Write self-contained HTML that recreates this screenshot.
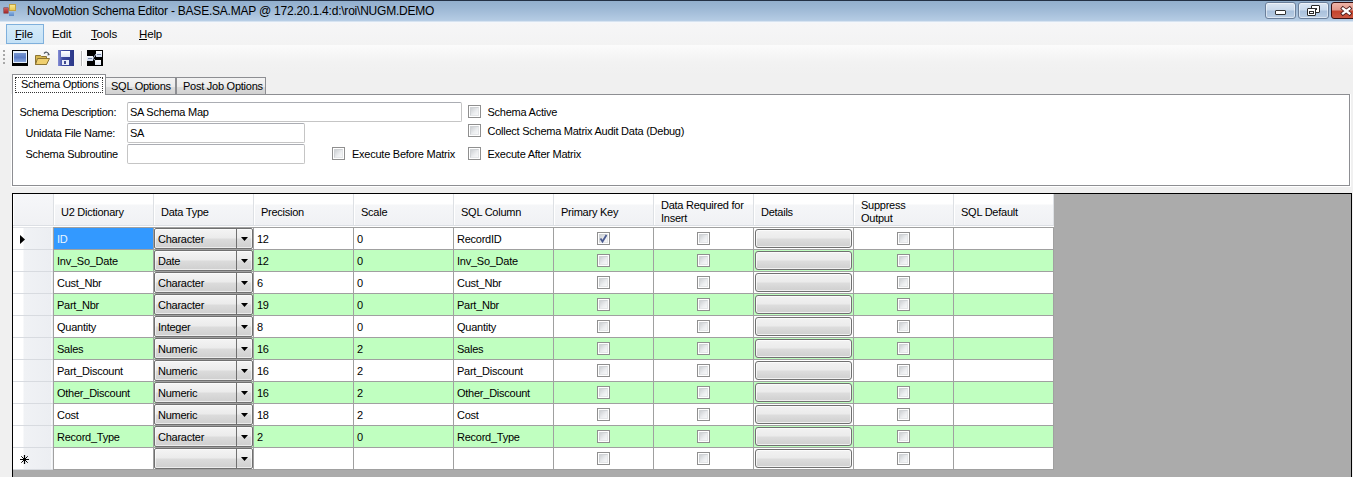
<!DOCTYPE html><html><head><meta charset="utf-8"><style>
html,body{margin:0;padding:0;}
body{width:1353px;height:477px;overflow:hidden;position:relative;background:#f0f0f0;font-family:"Liberation Sans",sans-serif;}
.t{position:absolute;white-space:nowrap;color:#000;}
.cb{position:absolute;width:13px;height:13px;box-sizing:border-box;border:1px solid #8f8f8f;background:#fff;}
.cb::before{content:"";position:absolute;left:1px;top:1px;width:9px;height:9px;box-sizing:border-box;border:1px solid #cfd2d5;border-right-color:#e4e6e8;border-bottom-color:#e4e6e8;background:linear-gradient(135deg,#cdd0d3,#eceef0 60%,#f6f7f8);}
.cb svg{z-index:2}
.combo{position:absolute;width:99px;height:21px;box-sizing:border-box;border:1px solid #707070;border-radius:2px;background:linear-gradient(#f4f4f4 0,#ebebeb 9px,#dcdcdc 10px,#cfcfcf 19px);box-shadow:inset 0 0 0 1px rgba(255,255,255,0.6);}
.cbtn{position:absolute;left:81px;top:0;width:16px;height:19px;border-left:1px solid #707070;box-sizing:border-box;}
.arr{position:absolute;left:86px;top:8px;}
.btn{position:absolute;width:97px;height:19px;box-sizing:border-box;border:1px solid #707070;border-radius:3px;background:linear-gradient(#f2f2f2 0,#ebebeb 8px,#dddddd 9px,#cfcfcf 17px);box-shadow:inset 0 0 0 1px rgba(255,255,255,0.7);}
</style></head><body><div style="position:absolute;left:0px;top:0px;width:1353px;height:23px;background:linear-gradient(#92afcd 1px,#9cb7d4 8px,#b4cbe3 20px,#bad0e7 21px,#f4f7fb 22px);"></div>
<div style="position:absolute;left:0px;top:0px;width:1353px;height:1px;background:#233044;"></div>
<div style="position:absolute;left:4px;top:8px;width:4px;height:5px;background:linear-gradient(#d06060,#a02828);box-shadow:0 0 0 0.5px #802020;"></div>
<div style="position:absolute;left:9px;top:4px;width:7px;height:7px;background:linear-gradient(#f8e890,#e8c850);border:1px solid #c0a040;box-sizing:border-box;"></div>
<div style="position:absolute;left:9px;top:12px;width:5px;height:4px;background:linear-gradient(#88b0e0,#5a88c8);"></div>
<div class="t" style="left:27px;top:5px;font-size:12px;line-height:12px;letter-spacing:-0.22px;color:#000;">NovoMotion Schema Editor - BASE.SA.MAP @ 172.20.1.4:d:\roi\NUGM.DEMO</div>
<div style="position:absolute;left:1265px;top:2px;width:31px;height:17px;box-sizing:border-box;border:1px solid #6b7f9a;border-radius:3px;background:linear-gradient(#dbe6f3 0,#c9d9ec 7px,#a9c0db 8px,#bcd0e6 16px);box-shadow:inset 0 0 0 1px rgba(255,255,255,0.5);"></div>
<div style="position:absolute;left:1298px;top:2px;width:31px;height:17px;box-sizing:border-box;border:1px solid #6b7f9a;border-radius:3px;background:linear-gradient(#dbe6f3 0,#c9d9ec 7px,#a9c0db 8px,#bcd0e6 16px);box-shadow:inset 0 0 0 1px rgba(255,255,255,0.5);"></div>
<div style="position:absolute;left:1275px;top:10px;width:11px;height:5px;box-sizing:border-box;background:#fff;border:1px solid #333;border-radius:1px;"></div>
<div style="position:absolute;left:1311px;top:5px;width:9px;height:8px;box-sizing:border-box;background:#fff;border:1px solid #2a2a2a;border-radius:1px;"></div>
<div style="position:absolute;left:1314px;top:8px;width:3px;height:2px;box-sizing:border-box;border:1px solid #2a2a2a;"></div>
<div style="position:absolute;left:1307px;top:8px;width:9px;height:8px;box-sizing:border-box;background:#fff;border:1px solid #2a2a2a;border-radius:1px;"></div>
<div style="position:absolute;left:1309px;top:11px;width:5px;height:3px;box-sizing:border-box;border:1px solid #2a2a2a;"></div>
<div style="position:absolute;left:1331px;top:2px;width:30px;height:17px;box-sizing:border-box;border:1px solid #3a1010;border-radius:3px;background:linear-gradient(#eeb4a8 0,#e0978a 7px,#c4432c 8px,#cc5a44 16px);"></div>
<svg style="position:absolute;left:1339px;top:4px" width="14" height="13"><path d="M4 4.5 L10.5 9.5 M10.5 4.5 L4 9.5" stroke="#4a1a1a" stroke-width="4" stroke-linecap="square"/><path d="M4 4.5 L10.5 9.5 M10.5 4.5 L4 9.5" stroke="#fff" stroke-width="2.3" stroke-linecap="square"/></svg>
<div style="position:absolute;left:0px;top:23px;width:1353px;height:22px;background:linear-gradient(#f6f6f7,#f3f3f3);"></div>
<div style="position:absolute;left:6px;top:24px;width:38px;height:20px;box-sizing:border-box;border:1px solid #7fb0dc;background:linear-gradient(#d6ebf9,#c4e1f6);"></div>
<div class="t" style="left:15px;top:29px;font-size:11.5px;line-height:11.5px;letter-spacing:-0.15px;color:#000;">File</div>
<div class="t" style="left:52px;top:29px;font-size:11.5px;line-height:11.5px;letter-spacing:-0.15px;color:#000;">Edit</div>
<div class="t" style="left:91px;top:29px;font-size:11.5px;line-height:11.5px;letter-spacing:-0.15px;color:#000;">Tools</div>
<div class="t" style="left:139px;top:29px;font-size:11.5px;line-height:11.5px;letter-spacing:-0.15px;color:#000;">Help</div>
<div style="position:absolute;left:15px;top:39px;width:6px;height:1px;background:#000;"></div>
<div style="position:absolute;left:91px;top:39px;width:6px;height:1px;background:#000;"></div>
<div style="position:absolute;left:139px;top:39px;width:8px;height:1px;background:#000;"></div>
<div style="position:absolute;left:0px;top:45px;width:1353px;height:29px;background:linear-gradient(#fbfbfb,#f2f2f2 60%,#f0f0f0);"></div>
<div style="position:absolute;left:3px;top:50px;width:2px;height:2px;background:#a8a8a8;"></div>
<div style="position:absolute;left:3px;top:54px;width:2px;height:2px;background:#a8a8a8;"></div>
<div style="position:absolute;left:3px;top:58px;width:2px;height:2px;background:#a8a8a8;"></div>
<div style="position:absolute;left:3px;top:62px;width:2px;height:2px;background:#a8a8a8;"></div>
<div style="position:absolute;left:12px;top:50px;width:16px;height:16px;background:#000;"></div>
<div style="position:absolute;left:13px;top:51px;width:14px;height:12px;background:#e6f0fb;"></div>
<div style="position:absolute;left:14px;top:53px;width:12px;height:9px;background:linear-gradient(#7896cf,#5a7cc4 50%,#8aa8e0);"></div>
<svg style="position:absolute;left:34px;top:50px" width="18" height="16"><path d="M1.5 5.5 h5 l1 1 h5 v8 h-11z" fill="#d8b850" stroke="#8c7434"/><path d="M3.5 8.5 h12 l-3 6 h-11z" fill="#f0d070" stroke="#8c7434"/><path d="M10 3.5 q3 -3 5 1" fill="none" stroke="#505860" stroke-width="1.2"/><path d="M14 3 l2 2 l-2.5 0.5z" fill="#505860"/></svg>
<div style="position:absolute;left:58px;top:50px;width:16px;height:16px;background:linear-gradient(90deg,#8890d8,#3c4aa0 30%,#2c3888);"></div>
<div style="position:absolute;left:61px;top:51px;width:9px;height:6px;background:linear-gradient(#fff,#dde4f8);"></div>
<div style="position:absolute;left:62px;top:60px;width:7px;height:5px;background:#e8ecf8;"></div>
<div style="position:absolute;left:64px;top:61px;width:2px;height:3px;background:#404a90;"></div>
<div style="position:absolute;left:81px;top:51px;width:1px;height:15px;background:#b8b8b8;"></div>
<div style="position:absolute;left:82px;top:51px;width:1px;height:15px;background:#fff;"></div>
<div style="position:absolute;left:87px;top:50px;width:16px;height:16px;background:#000;"></div>
<div style="position:absolute;left:87px;top:56px;width:6px;height:5px;background:linear-gradient(#f4f8ff,#c8d4e8);"></div>
<div style="position:absolute;left:88px;top:58px;width:4px;height:1px;background:#7888a8;"></div>
<div style="position:absolute;left:96px;top:51px;width:6px;height:6px;background:linear-gradient(#ffffff,#d0dcf0);"></div>
<div style="position:absolute;left:97px;top:54px;width:4px;height:1px;background:#7888a8;"></div>
<div style="position:absolute;left:95px;top:60px;width:6px;height:5px;background:linear-gradient(#ffffff,#e0e8f8);"></div>
<svg style="position:absolute;left:87px;top:50px" width="16" height="16"><path d="M6 8.5 L9 4 M6 8.5 L8.5 10.5" stroke="#b8c8e0" stroke-width="1"/></svg>
<div style="position:absolute;left:105px;top:77px;width:71px;height:18px;box-sizing:border-box;border:1px solid #8d8e92;border-bottom:none;background:linear-gradient(#f3f3f3,#ebebeb 50%,#dddddd 51%,#cfcfcf);"></div>
<div style="position:absolute;left:176px;top:77px;width:90px;height:18px;box-sizing:border-box;border:1px solid #8d8e92;border-bottom:none;background:linear-gradient(#f3f3f3,#ebebeb 50%,#dddddd 51%,#cfcfcf);"></div>
<div style="position:absolute;left:12px;top:94px;width:1338px;height:92px;box-sizing:border-box;border:1px solid #8d8e92;background:#fff;"></div>
<div style="position:absolute;left:11px;top:94px;width:1px;height:93px;background:#fff;"></div>
<div style="position:absolute;left:1350px;top:94px;width:1px;height:93px;background:#fff;"></div>
<div style="position:absolute;left:11px;top:186px;width:1340px;height:1px;background:#fff;"></div>
<div style="position:absolute;left:12px;top:74px;width:94px;height:21px;box-sizing:border-box;border:1px solid #8d8e92;border-bottom:none;background:#fff;"></div>
<div style="position:absolute;left:13px;top:94px;width:92px;height:1px;background:#fff;"></div>
<div style="position:absolute;left:15px;top:77px;width:88px;height:16px;box-sizing:border-box;border:1px dotted #333;"></div>
<div class="t" style="left:21px;top:79px;font-size:11px;line-height:11px;letter-spacing:-0.25px;color:#000;">Schema Options</div>
<div class="t" style="left:111px;top:81px;font-size:11px;line-height:11px;letter-spacing:-0.25px;color:#000;">SQL Options</div>
<div class="t" style="left:183px;top:81px;font-size:11px;line-height:11px;letter-spacing:-0.25px;color:#000;">Post Job Options</div>
<div class="t" style="left:19.5px;top:107px;font-size:11px;line-height:11px;letter-spacing:-0.25px;color:#000;">Schema Description:</div>
<div class="t" style="left:25.5px;top:128px;font-size:11px;line-height:11px;letter-spacing:-0.25px;color:#000;">Unidata File Name:</div>
<div class="t" style="left:25.5px;top:149px;font-size:11px;line-height:11px;letter-spacing:-0.25px;color:#000;">Schema Subroutine</div>
<div style="position:absolute;left:127px;top:102px;width:335px;height:20px;box-sizing:border-box;border:1px solid #c5c5c5;border-top-color:#abadb3;border-radius:2px;background:#fff;"></div>
<div class="t" style="left:130px;top:107px;font-size:11px;line-height:11px;letter-spacing:-0.25px;color:#000;">SA Schema Map</div>
<div style="position:absolute;left:127px;top:123px;width:178px;height:20px;box-sizing:border-box;border:1px solid #c5c5c5;border-top-color:#abadb3;border-radius:2px;background:#fff;"></div>
<div class="t" style="left:130px;top:128px;font-size:11px;line-height:11px;letter-spacing:-0.25px;color:#000;">SA</div>
<div style="position:absolute;left:127px;top:144px;width:178px;height:20px;box-sizing:border-box;border:1px solid #c5c5c5;border-top-color:#abadb3;border-radius:2px;background:#fff;"></div>
<div class="cb" style="left:468px;top:105px"></div>
<div class="t" style="left:487.5px;top:107px;font-size:11px;line-height:11px;letter-spacing:-0.25px;color:#000;">Schema Active</div>
<div class="cb" style="left:468px;top:124px"></div>
<div class="t" style="left:487.5px;top:126px;font-size:11px;line-height:11px;letter-spacing:-0.25px;color:#000;">Collect Schema Matrix Audit Data (Debug)</div>
<div class="cb" style="left:468px;top:147px"></div>
<div class="t" style="left:487.5px;top:149px;font-size:11px;line-height:11px;letter-spacing:-0.25px;color:#000;">Execute After Matrix</div>
<div class="cb" style="left:332px;top:147px"></div>
<div class="t" style="left:352px;top:149px;font-size:11px;line-height:11px;letter-spacing:-0.25px;color:#000;">Execute Before Matrix</div>
<div style="position:absolute;left:12px;top:193px;width:1340px;height:284px;background:#ababab;"></div>
<div style="position:absolute;left:12px;top:193px;width:1340px;height:1px;background:#000;"></div>
<div style="position:absolute;left:12px;top:193px;width:1px;height:284px;background:#000;"></div>
<div style="position:absolute;left:1351px;top:193px;width:1px;height:284px;background:#000;"></div>
<div style="position:absolute;left:13px;top:194px;width:1041px;height:33px;background:linear-gradient(#ffffff 0,#ffffff 10px,#f5f6f8 11px,#f0f1f4 31px);"></div>
<div style="position:absolute;left:13px;top:225px;width:1041px;height:1px;background:#dcdfe4;"></div>
<div style="position:absolute;left:13px;top:226px;width:1041px;height:1px;background:#ffffff;"></div>
<div style="position:absolute;left:13px;top:194px;width:40px;height:31px;background:linear-gradient(#f6f7f9,#f0f1f4);"></div>
<div style="position:absolute;left:13px;top:194px;width:1px;height:31px;background:#fff;"></div>
<div style="position:absolute;left:53px;top:194px;width:1px;height:31px;background:#dde0e4;"></div>
<div style="position:absolute;left:54px;top:194px;width:1px;height:31px;background:#fff;"></div>
<div style="position:absolute;left:153px;top:194px;width:1px;height:31px;background:#dde0e4;"></div>
<div style="position:absolute;left:154px;top:194px;width:1px;height:31px;background:#fff;"></div>
<div style="position:absolute;left:253px;top:194px;width:1px;height:31px;background:#dde0e4;"></div>
<div style="position:absolute;left:254px;top:194px;width:1px;height:31px;background:#fff;"></div>
<div style="position:absolute;left:353px;top:194px;width:1px;height:31px;background:#dde0e4;"></div>
<div style="position:absolute;left:354px;top:194px;width:1px;height:31px;background:#fff;"></div>
<div style="position:absolute;left:453px;top:194px;width:1px;height:31px;background:#dde0e4;"></div>
<div style="position:absolute;left:454px;top:194px;width:1px;height:31px;background:#fff;"></div>
<div style="position:absolute;left:553px;top:194px;width:1px;height:31px;background:#dde0e4;"></div>
<div style="position:absolute;left:554px;top:194px;width:1px;height:31px;background:#fff;"></div>
<div style="position:absolute;left:653px;top:194px;width:1px;height:31px;background:#dde0e4;"></div>
<div style="position:absolute;left:654px;top:194px;width:1px;height:31px;background:#fff;"></div>
<div style="position:absolute;left:753px;top:194px;width:1px;height:31px;background:#dde0e4;"></div>
<div style="position:absolute;left:754px;top:194px;width:1px;height:31px;background:#fff;"></div>
<div style="position:absolute;left:853px;top:194px;width:1px;height:31px;background:#dde0e4;"></div>
<div style="position:absolute;left:854px;top:194px;width:1px;height:31px;background:#fff;"></div>
<div style="position:absolute;left:953px;top:194px;width:1px;height:31px;background:#dde0e4;"></div>
<div style="position:absolute;left:954px;top:194px;width:1px;height:31px;background:#fff;"></div>
<div style="position:absolute;left:1053px;top:194px;width:1px;height:31px;background:#dde0e4;"></div>
<div class="t" style="left:61px;top:207px;font-size:11px;line-height:11px;letter-spacing:-0.25px;color:#000;">U2 Dictionary</div>
<div class="t" style="left:161px;top:207px;font-size:11px;line-height:11px;letter-spacing:-0.25px;color:#000;">Data Type</div>
<div class="t" style="left:261px;top:207px;font-size:11px;line-height:11px;letter-spacing:-0.25px;color:#000;">Precision</div>
<div class="t" style="left:361px;top:207px;font-size:11px;line-height:11px;letter-spacing:-0.25px;color:#000;">Scale</div>
<div class="t" style="left:461px;top:207px;font-size:11px;line-height:11px;letter-spacing:-0.25px;color:#000;">SQL Column</div>
<div class="t" style="left:561px;top:207px;font-size:11px;line-height:11px;letter-spacing:-0.25px;color:#000;">Primary Key</div>
<div class="t" style="left:761px;top:207px;font-size:11px;line-height:11px;letter-spacing:-0.25px;color:#000;">Details</div>
<div class="t" style="left:961px;top:207px;font-size:11px;line-height:11px;letter-spacing:-0.25px;color:#000;">SQL Default</div>
<div class="t" style="left:661px;top:200px;font-size:11px;line-height:11px;letter-spacing:-0.25px;color:#000;">Data Required for</div>
<div class="t" style="left:661px;top:213px;font-size:11px;line-height:11px;letter-spacing:-0.25px;color:#000;">Insert</div>
<div class="t" style="left:861px;top:200px;font-size:11px;line-height:11px;letter-spacing:-0.25px;color:#000;">Suppress</div>
<div class="t" style="left:861px;top:213px;font-size:11px;line-height:11px;letter-spacing:-0.25px;color:#000;">Output</div>
<div style="position:absolute;left:13px;top:228px;width:40px;height:21px;background:linear-gradient(90deg,#ffffff 0,#ffffff 10px,#f0f2f5 11px,#eceef2 38px);"></div>
<div style="position:absolute;left:51px;top:228px;width:1px;height:21px;background:#f8f9fa;"></div>
<div style="position:absolute;left:13px;top:249px;width:40px;height:1px;background:#d8dbe0;"></div>
<div style="position:absolute;left:54px;top:228px;width:999px;height:21px;background:#ffffff;"></div>
<div style="position:absolute;left:54px;top:228px;width:99px;height:21px;background:#3399ff;"></div>
<div class="t" style="left:57px;top:234px;font-size:11px;line-height:11px;letter-spacing:-0.25px;color:#eaf6ff;">ID</div>
<div class="t" style="left:257px;top:234px;font-size:11px;line-height:11px;letter-spacing:-0.25px;color:#000;">12</div>
<div class="t" style="left:357px;top:234px;font-size:11px;line-height:11px;letter-spacing:-0.25px;color:#000;">0</div>
<div class="t" style="left:457px;top:234px;font-size:11px;line-height:11px;letter-spacing:-0.25px;color:#000;">RecordID</div>
<div class="combo" style="left:154px;top:228px"><div class="cbtn"></div><svg class="arr" width="7" height="4"><path d="M0 0 H7 L3.5 4z" fill="#000"/></svg><div class="t" style="left:3px;top:5px;font-size:11px;line-height:11px;letter-spacing:-0.25px">Character</div></div>
<div class="cb" style="left:597px;top:232px"><svg width="11" height="11" style="position:absolute;left:0;top:0"><path d="M2.5 5.5 L4.5 8.5 L8.5 2" stroke="#4a5a90" stroke-width="1.8" fill="none"/></svg></div>
<div class="cb" style="left:697px;top:232px"></div>
<div class="cb" style="left:897px;top:232px"></div>
<div class="btn" style="left:755px;top:229px"></div>
<div style="position:absolute;left:13px;top:250px;width:40px;height:21px;background:linear-gradient(90deg,#ffffff 0,#ffffff 10px,#f0f2f5 11px,#eceef2 38px);"></div>
<div style="position:absolute;left:51px;top:250px;width:1px;height:21px;background:#f8f9fa;"></div>
<div style="position:absolute;left:13px;top:271px;width:40px;height:1px;background:#d8dbe0;"></div>
<div style="position:absolute;left:54px;top:250px;width:999px;height:21px;background:#c0ffc0;"></div>
<div class="t" style="left:57px;top:256px;font-size:11px;line-height:11px;letter-spacing:-0.25px;color:#000;">Inv_So_Date</div>
<div class="t" style="left:257px;top:256px;font-size:11px;line-height:11px;letter-spacing:-0.25px;color:#000;">12</div>
<div class="t" style="left:357px;top:256px;font-size:11px;line-height:11px;letter-spacing:-0.25px;color:#000;">0</div>
<div class="t" style="left:457px;top:256px;font-size:11px;line-height:11px;letter-spacing:-0.25px;color:#000;">Inv_So_Date</div>
<div class="combo" style="left:154px;top:250px"><div class="cbtn"></div><svg class="arr" width="7" height="4"><path d="M0 0 H7 L3.5 4z" fill="#000"/></svg><div class="t" style="left:3px;top:5px;font-size:11px;line-height:11px;letter-spacing:-0.25px">Date</div></div>
<div class="cb" style="left:597px;top:254px"></div>
<div class="cb" style="left:697px;top:254px"></div>
<div class="cb" style="left:897px;top:254px"></div>
<div class="btn" style="left:755px;top:251px"></div>
<div style="position:absolute;left:13px;top:272px;width:40px;height:21px;background:linear-gradient(90deg,#ffffff 0,#ffffff 10px,#f0f2f5 11px,#eceef2 38px);"></div>
<div style="position:absolute;left:51px;top:272px;width:1px;height:21px;background:#f8f9fa;"></div>
<div style="position:absolute;left:13px;top:293px;width:40px;height:1px;background:#d8dbe0;"></div>
<div style="position:absolute;left:54px;top:272px;width:999px;height:21px;background:#ffffff;"></div>
<div class="t" style="left:57px;top:278px;font-size:11px;line-height:11px;letter-spacing:-0.25px;color:#000;">Cust_Nbr</div>
<div class="t" style="left:257px;top:278px;font-size:11px;line-height:11px;letter-spacing:-0.25px;color:#000;">6</div>
<div class="t" style="left:357px;top:278px;font-size:11px;line-height:11px;letter-spacing:-0.25px;color:#000;">0</div>
<div class="t" style="left:457px;top:278px;font-size:11px;line-height:11px;letter-spacing:-0.25px;color:#000;">Cust_Nbr</div>
<div class="combo" style="left:154px;top:272px"><div class="cbtn"></div><svg class="arr" width="7" height="4"><path d="M0 0 H7 L3.5 4z" fill="#000"/></svg><div class="t" style="left:3px;top:5px;font-size:11px;line-height:11px;letter-spacing:-0.25px">Character</div></div>
<div class="cb" style="left:597px;top:276px"></div>
<div class="cb" style="left:697px;top:276px"></div>
<div class="cb" style="left:897px;top:276px"></div>
<div class="btn" style="left:755px;top:273px"></div>
<div style="position:absolute;left:13px;top:294px;width:40px;height:21px;background:linear-gradient(90deg,#ffffff 0,#ffffff 10px,#f0f2f5 11px,#eceef2 38px);"></div>
<div style="position:absolute;left:51px;top:294px;width:1px;height:21px;background:#f8f9fa;"></div>
<div style="position:absolute;left:13px;top:315px;width:40px;height:1px;background:#d8dbe0;"></div>
<div style="position:absolute;left:54px;top:294px;width:999px;height:21px;background:#c0ffc0;"></div>
<div class="t" style="left:57px;top:300px;font-size:11px;line-height:11px;letter-spacing:-0.25px;color:#000;">Part_Nbr</div>
<div class="t" style="left:257px;top:300px;font-size:11px;line-height:11px;letter-spacing:-0.25px;color:#000;">19</div>
<div class="t" style="left:357px;top:300px;font-size:11px;line-height:11px;letter-spacing:-0.25px;color:#000;">0</div>
<div class="t" style="left:457px;top:300px;font-size:11px;line-height:11px;letter-spacing:-0.25px;color:#000;">Part_Nbr</div>
<div class="combo" style="left:154px;top:294px"><div class="cbtn"></div><svg class="arr" width="7" height="4"><path d="M0 0 H7 L3.5 4z" fill="#000"/></svg><div class="t" style="left:3px;top:5px;font-size:11px;line-height:11px;letter-spacing:-0.25px">Character</div></div>
<div class="cb" style="left:597px;top:298px"></div>
<div class="cb" style="left:697px;top:298px"></div>
<div class="cb" style="left:897px;top:298px"></div>
<div class="btn" style="left:755px;top:295px"></div>
<div style="position:absolute;left:13px;top:316px;width:40px;height:21px;background:linear-gradient(90deg,#ffffff 0,#ffffff 10px,#f0f2f5 11px,#eceef2 38px);"></div>
<div style="position:absolute;left:51px;top:316px;width:1px;height:21px;background:#f8f9fa;"></div>
<div style="position:absolute;left:13px;top:337px;width:40px;height:1px;background:#d8dbe0;"></div>
<div style="position:absolute;left:54px;top:316px;width:999px;height:21px;background:#ffffff;"></div>
<div class="t" style="left:57px;top:322px;font-size:11px;line-height:11px;letter-spacing:-0.25px;color:#000;">Quantity</div>
<div class="t" style="left:257px;top:322px;font-size:11px;line-height:11px;letter-spacing:-0.25px;color:#000;">8</div>
<div class="t" style="left:357px;top:322px;font-size:11px;line-height:11px;letter-spacing:-0.25px;color:#000;">0</div>
<div class="t" style="left:457px;top:322px;font-size:11px;line-height:11px;letter-spacing:-0.25px;color:#000;">Quantity</div>
<div class="combo" style="left:154px;top:316px"><div class="cbtn"></div><svg class="arr" width="7" height="4"><path d="M0 0 H7 L3.5 4z" fill="#000"/></svg><div class="t" style="left:3px;top:5px;font-size:11px;line-height:11px;letter-spacing:-0.25px">Integer</div></div>
<div class="cb" style="left:597px;top:320px"></div>
<div class="cb" style="left:697px;top:320px"></div>
<div class="cb" style="left:897px;top:320px"></div>
<div class="btn" style="left:755px;top:317px"></div>
<div style="position:absolute;left:13px;top:338px;width:40px;height:21px;background:linear-gradient(90deg,#ffffff 0,#ffffff 10px,#f0f2f5 11px,#eceef2 38px);"></div>
<div style="position:absolute;left:51px;top:338px;width:1px;height:21px;background:#f8f9fa;"></div>
<div style="position:absolute;left:13px;top:359px;width:40px;height:1px;background:#d8dbe0;"></div>
<div style="position:absolute;left:54px;top:338px;width:999px;height:21px;background:#c0ffc0;"></div>
<div class="t" style="left:57px;top:344px;font-size:11px;line-height:11px;letter-spacing:-0.25px;color:#000;">Sales</div>
<div class="t" style="left:257px;top:344px;font-size:11px;line-height:11px;letter-spacing:-0.25px;color:#000;">16</div>
<div class="t" style="left:357px;top:344px;font-size:11px;line-height:11px;letter-spacing:-0.25px;color:#000;">2</div>
<div class="t" style="left:457px;top:344px;font-size:11px;line-height:11px;letter-spacing:-0.25px;color:#000;">Sales</div>
<div class="combo" style="left:154px;top:338px"><div class="cbtn"></div><svg class="arr" width="7" height="4"><path d="M0 0 H7 L3.5 4z" fill="#000"/></svg><div class="t" style="left:3px;top:5px;font-size:11px;line-height:11px;letter-spacing:-0.25px">Numeric</div></div>
<div class="cb" style="left:597px;top:342px"></div>
<div class="cb" style="left:697px;top:342px"></div>
<div class="cb" style="left:897px;top:342px"></div>
<div class="btn" style="left:755px;top:339px"></div>
<div style="position:absolute;left:13px;top:360px;width:40px;height:21px;background:linear-gradient(90deg,#ffffff 0,#ffffff 10px,#f0f2f5 11px,#eceef2 38px);"></div>
<div style="position:absolute;left:51px;top:360px;width:1px;height:21px;background:#f8f9fa;"></div>
<div style="position:absolute;left:13px;top:381px;width:40px;height:1px;background:#d8dbe0;"></div>
<div style="position:absolute;left:54px;top:360px;width:999px;height:21px;background:#ffffff;"></div>
<div class="t" style="left:57px;top:366px;font-size:11px;line-height:11px;letter-spacing:-0.25px;color:#000;">Part_Discount</div>
<div class="t" style="left:257px;top:366px;font-size:11px;line-height:11px;letter-spacing:-0.25px;color:#000;">16</div>
<div class="t" style="left:357px;top:366px;font-size:11px;line-height:11px;letter-spacing:-0.25px;color:#000;">2</div>
<div class="t" style="left:457px;top:366px;font-size:11px;line-height:11px;letter-spacing:-0.25px;color:#000;">Part_Discount</div>
<div class="combo" style="left:154px;top:360px"><div class="cbtn"></div><svg class="arr" width="7" height="4"><path d="M0 0 H7 L3.5 4z" fill="#000"/></svg><div class="t" style="left:3px;top:5px;font-size:11px;line-height:11px;letter-spacing:-0.25px">Numeric</div></div>
<div class="cb" style="left:597px;top:364px"></div>
<div class="cb" style="left:697px;top:364px"></div>
<div class="cb" style="left:897px;top:364px"></div>
<div class="btn" style="left:755px;top:361px"></div>
<div style="position:absolute;left:13px;top:382px;width:40px;height:21px;background:linear-gradient(90deg,#ffffff 0,#ffffff 10px,#f0f2f5 11px,#eceef2 38px);"></div>
<div style="position:absolute;left:51px;top:382px;width:1px;height:21px;background:#f8f9fa;"></div>
<div style="position:absolute;left:13px;top:403px;width:40px;height:1px;background:#d8dbe0;"></div>
<div style="position:absolute;left:54px;top:382px;width:999px;height:21px;background:#c0ffc0;"></div>
<div class="t" style="left:57px;top:388px;font-size:11px;line-height:11px;letter-spacing:-0.25px;color:#000;">Other_Discount</div>
<div class="t" style="left:257px;top:388px;font-size:11px;line-height:11px;letter-spacing:-0.25px;color:#000;">16</div>
<div class="t" style="left:357px;top:388px;font-size:11px;line-height:11px;letter-spacing:-0.25px;color:#000;">2</div>
<div class="t" style="left:457px;top:388px;font-size:11px;line-height:11px;letter-spacing:-0.25px;color:#000;">Other_Discount</div>
<div class="combo" style="left:154px;top:382px"><div class="cbtn"></div><svg class="arr" width="7" height="4"><path d="M0 0 H7 L3.5 4z" fill="#000"/></svg><div class="t" style="left:3px;top:5px;font-size:11px;line-height:11px;letter-spacing:-0.25px">Numeric</div></div>
<div class="cb" style="left:597px;top:386px"></div>
<div class="cb" style="left:697px;top:386px"></div>
<div class="cb" style="left:897px;top:386px"></div>
<div class="btn" style="left:755px;top:383px"></div>
<div style="position:absolute;left:13px;top:404px;width:40px;height:21px;background:linear-gradient(90deg,#ffffff 0,#ffffff 10px,#f0f2f5 11px,#eceef2 38px);"></div>
<div style="position:absolute;left:51px;top:404px;width:1px;height:21px;background:#f8f9fa;"></div>
<div style="position:absolute;left:13px;top:425px;width:40px;height:1px;background:#d8dbe0;"></div>
<div style="position:absolute;left:54px;top:404px;width:999px;height:21px;background:#ffffff;"></div>
<div class="t" style="left:57px;top:410px;font-size:11px;line-height:11px;letter-spacing:-0.25px;color:#000;">Cost</div>
<div class="t" style="left:257px;top:410px;font-size:11px;line-height:11px;letter-spacing:-0.25px;color:#000;">18</div>
<div class="t" style="left:357px;top:410px;font-size:11px;line-height:11px;letter-spacing:-0.25px;color:#000;">2</div>
<div class="t" style="left:457px;top:410px;font-size:11px;line-height:11px;letter-spacing:-0.25px;color:#000;">Cost</div>
<div class="combo" style="left:154px;top:404px"><div class="cbtn"></div><svg class="arr" width="7" height="4"><path d="M0 0 H7 L3.5 4z" fill="#000"/></svg><div class="t" style="left:3px;top:5px;font-size:11px;line-height:11px;letter-spacing:-0.25px">Numeric</div></div>
<div class="cb" style="left:597px;top:408px"></div>
<div class="cb" style="left:697px;top:408px"></div>
<div class="cb" style="left:897px;top:408px"></div>
<div class="btn" style="left:755px;top:405px"></div>
<div style="position:absolute;left:13px;top:426px;width:40px;height:21px;background:linear-gradient(90deg,#ffffff 0,#ffffff 10px,#f0f2f5 11px,#eceef2 38px);"></div>
<div style="position:absolute;left:51px;top:426px;width:1px;height:21px;background:#f8f9fa;"></div>
<div style="position:absolute;left:13px;top:447px;width:40px;height:1px;background:#d8dbe0;"></div>
<div style="position:absolute;left:54px;top:426px;width:999px;height:21px;background:#c0ffc0;"></div>
<div class="t" style="left:57px;top:432px;font-size:11px;line-height:11px;letter-spacing:-0.25px;color:#000;">Record_Type</div>
<div class="t" style="left:257px;top:432px;font-size:11px;line-height:11px;letter-spacing:-0.25px;color:#000;">2</div>
<div class="t" style="left:357px;top:432px;font-size:11px;line-height:11px;letter-spacing:-0.25px;color:#000;">0</div>
<div class="t" style="left:457px;top:432px;font-size:11px;line-height:11px;letter-spacing:-0.25px;color:#000;">Record_Type</div>
<div class="combo" style="left:154px;top:426px"><div class="cbtn"></div><svg class="arr" width="7" height="4"><path d="M0 0 H7 L3.5 4z" fill="#000"/></svg><div class="t" style="left:3px;top:5px;font-size:11px;line-height:11px;letter-spacing:-0.25px">Character</div></div>
<div class="cb" style="left:597px;top:430px"></div>
<div class="cb" style="left:697px;top:430px"></div>
<div class="cb" style="left:897px;top:430px"></div>
<div class="btn" style="left:755px;top:427px"></div>
<div style="position:absolute;left:13px;top:448px;width:40px;height:21px;background:linear-gradient(90deg,#ffffff 0,#ffffff 10px,#f0f2f5 11px,#eceef2 38px);"></div>
<div style="position:absolute;left:51px;top:448px;width:1px;height:21px;background:#f8f9fa;"></div>
<div style="position:absolute;left:13px;top:469px;width:40px;height:1px;background:#d8dbe0;"></div>
<div style="position:absolute;left:54px;top:448px;width:999px;height:21px;background:#ffffff;"></div>
<div class="combo" style="left:154px;top:448px"><div class="cbtn"></div><svg class="arr" width="7" height="4"><path d="M0 0 H7 L3.5 4z" fill="#000"/></svg></div>
<div class="cb" style="left:597px;top:452px"></div>
<div class="cb" style="left:697px;top:452px"></div>
<div class="cb" style="left:897px;top:452px"></div>
<div class="btn" style="left:755px;top:449px"></div>
<div style="position:absolute;left:54px;top:227px;width:1000px;height:1px;background:#a0a0a0;"></div>
<div style="position:absolute;left:54px;top:249px;width:1000px;height:1px;background:#a0a0a0;"></div>
<div style="position:absolute;left:54px;top:271px;width:1000px;height:1px;background:#a0a0a0;"></div>
<div style="position:absolute;left:54px;top:293px;width:1000px;height:1px;background:#a0a0a0;"></div>
<div style="position:absolute;left:54px;top:315px;width:1000px;height:1px;background:#a0a0a0;"></div>
<div style="position:absolute;left:54px;top:337px;width:1000px;height:1px;background:#a0a0a0;"></div>
<div style="position:absolute;left:54px;top:359px;width:1000px;height:1px;background:#a0a0a0;"></div>
<div style="position:absolute;left:54px;top:381px;width:1000px;height:1px;background:#a0a0a0;"></div>
<div style="position:absolute;left:54px;top:403px;width:1000px;height:1px;background:#a0a0a0;"></div>
<div style="position:absolute;left:54px;top:425px;width:1000px;height:1px;background:#a0a0a0;"></div>
<div style="position:absolute;left:54px;top:447px;width:1000px;height:1px;background:#a0a0a0;"></div>
<div style="position:absolute;left:54px;top:469px;width:1000px;height:1px;background:#a0a0a0;"></div>
<div style="position:absolute;left:53px;top:227px;width:1px;height:243px;background:#a0a0a0;"></div>
<div style="position:absolute;left:153px;top:227px;width:1px;height:243px;background:#a0a0a0;"></div>
<div style="position:absolute;left:253px;top:227px;width:1px;height:243px;background:#a0a0a0;"></div>
<div style="position:absolute;left:353px;top:227px;width:1px;height:243px;background:#a0a0a0;"></div>
<div style="position:absolute;left:453px;top:227px;width:1px;height:243px;background:#a0a0a0;"></div>
<div style="position:absolute;left:553px;top:227px;width:1px;height:243px;background:#a0a0a0;"></div>
<div style="position:absolute;left:653px;top:227px;width:1px;height:243px;background:#a0a0a0;"></div>
<div style="position:absolute;left:753px;top:227px;width:1px;height:243px;background:#a0a0a0;"></div>
<div style="position:absolute;left:853px;top:227px;width:1px;height:243px;background:#a0a0a0;"></div>
<div style="position:absolute;left:953px;top:227px;width:1px;height:243px;background:#a0a0a0;"></div>
<div style="position:absolute;left:1053px;top:227px;width:1px;height:243px;background:#a0a0a0;"></div>
<div style="position:absolute;left:13px;top:227px;width:40px;height:1px;background:#e2e4e8;"></div>
<svg style="position:absolute;left:19px;top:234px" width="8" height="12"><path d="M1 1 L6 5.5 L1 10z" fill="#000"/></svg>
<svg style="position:absolute;left:19px;top:454px" width="11" height="11"><path d="M5.5 1 V10 M1 5.5 H10" stroke="#000" stroke-width="1.2"/><path d="M2.3 2.3 L8.7 8.7 M8.7 2.3 L2.3 8.7" stroke="#000" stroke-width="1"/><circle cx="5.5" cy="5.5" r="1.4" fill="#000"/></svg></body></html>
